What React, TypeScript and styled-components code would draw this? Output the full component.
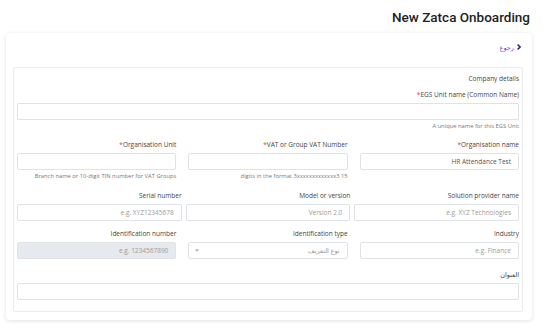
import React from 'react';
import styled, { createGlobalStyle } from 'styled-components';

const GlobalStyle = createGlobalStyle`
  body {
    margin: 0;
    background: #ffffff;
    font-family: 'Open Sans', 'DejaVu Sans', sans-serif;
    color: #333;
  }
`;

const Page = styled.div`
  width: 544px;
  height: 331px;
  overflow: hidden;
  padding: 0 12px 0 6px;
  box-sizing: border-box;
`;

const Header = styled.div`
  height: 33px;
  display: flex;
  align-items: center;
  justify-content: flex-end;
  padding-right: 2px;
`;

const Title = styled.h1`
  margin: 0;
  font-family: Roboto, 'Open Sans', sans-serif;
  font-size: 13.5px;
  font-weight: 500;
  color: #222;
`;

const Card = styled.div`
  background: #fff;
  border-radius: 4px;
  box-shadow: 0 1px 4px rgba(0, 0, 0, 0.12);
  padding: 7px 9px 8px 7px;
`;

const BackRow = styled.div`
  height: 14px;
  margin-bottom: 13px;
  display: flex;
  align-items: center;
  justify-content: flex-end;
  padding-right: 2px;
`;

const BackLink = styled.a`
  display: flex;
  align-items: center;
  gap: 3px;
  font-size: 6.5px;
  color: #6f42c1;
  text-decoration: none;
  svg {
    display: block;
  }
`;

const Section = styled.section`
  border: 1px solid #ececec;
  border-radius: 2px;
  padding: 6px 3px 11px 3px;
`;

const Heading = styled.div`
  height: 10px;
  line-height: 10px;
  font-size: 6.5px;
  text-align: right;
  color: #444;
`;

const Row = styled.div<{ $top: number; $cols?: number; $gap?: number }>`
  margin-top: ${(p) => p.$top}px;
  display: grid;
  grid-template-columns: repeat(${(p) => p.$cols ?? 1}, 1fr);
  column-gap: ${(p) => p.$gap ?? 12}px;
`;

const Field = styled.div`
  display: flex;
  flex-direction: column;
  min-width: 0;
`;

const Label = styled.label`
  height: 10px;
  line-height: 10px;
  font-size: 6.5px;
  text-align: right;
  color: #444;
  margin-bottom: 3px;
`;

const Star = styled.span`
  color: #e53935;
`;

const Input = styled.div<{ $disabled?: boolean; $value?: boolean }>`
  height: 17px;
  box-sizing: border-box;
  border: 1px solid #dfe2e6;
  border-radius: 2px;
  background: ${(p) => (p.$disabled ? '#e6e9ed' : '#fff')};
  display: flex;
  align-items: center;
  justify-content: space-between;
  padding: 0 7px 0 6px;
  font-size: 6.5px;
  color: ${(p) => (p.$value ? '#555' : '#9b9b9b')};
`;

const Text = styled.span`
  margin-left: auto;
`;

const Helper = styled.div`
  margin-top: 2px;
  height: 8px;
  line-height: 8px;
  font-size: 5.8px;
  text-align: right;
  color: #777;
  white-space: nowrap;
`;

const Caret = () => (
  <svg width="4" height="3" viewBox="0 0 4 3">
    <path d="M0 0.5 L2 2.5 L4 0.5 Z" fill="#9a9a9a" />
  </svg>
);

type FieldProps = {
  label: string;
  required?: boolean;
  placeholder?: string;
  value?: string;
  helper?: string;
  disabled?: boolean;
  select?: boolean;
};

const FormField = ({ label, required, placeholder, value, helper, disabled, select }: FieldProps) => (
  <Field>
    <Label>
      {required && <Star>*</Star>}
      {label}
    </Label>
    <Input $disabled={disabled} $value={!!value}>
      {select && <Caret />}
      <Text>{value ?? placeholder}</Text>
    </Input>
    {helper !== undefined && <Helper>{helper}</Helper>}
  </Field>
);

export default function App() {
  return (
    <Page>
      <GlobalStyle />
      <Header>
        <Title>New Zatca Onboarding</Title>
      </Header>
      <Card>
        <BackRow>
          <BackLink href="#">
            <span>رجوع</span>
            <svg width="4" height="6" viewBox="0 0 4 6">
              <path d="M0.6 0.6 L3.2 3 L0.6 5.4" stroke="#3b1f7a" strokeWidth="1.5" fill="none" />
            </svg>
          </BackLink>
        </BackRow>
        <Section>
          <Heading>Company details</Heading>
          <Row $top={6}>
            <FormField label="EGS Unit name (Common Name)" required helper="A unique name for this EGS Unit" />
          </Row>
          <Row $top={10} $cols={3}>
            <FormField label="Organisation Unit" required helper="Branch name or 10-digit TIN number for VAT Groups" />
            <FormField label="VAT or Group VAT Number" required helper="digits in the format 3xxxxxxxxxxxxx3 15" />
            <FormField label="Organisation name" required value="HR Attendance Test" helper="" />
          </Row>
          <Row $top={11} $cols={3} $gap={4}>
            <FormField label="Serial number" placeholder="e.g. XYZ12345678" />
            <FormField label="Model or version" placeholder="Version 2.0" />
            <FormField label="Solution provider name" placeholder="e.g. XYZ Technologies" />
          </Row>
          <Row $top={8} $cols={3}>
            <FormField label="Identification number" placeholder="e.g. 1234567890" disabled />
            <FormField label="Identification type" placeholder="نوع التعريف" select />
            <FormField label="Industry" placeholder="e.g. Finance" />
          </Row>
          <Row $top={11}>
            <FormField label="العنوان" />
          </Row>
        </Section>
      </Card>
    </Page>
  );
}
